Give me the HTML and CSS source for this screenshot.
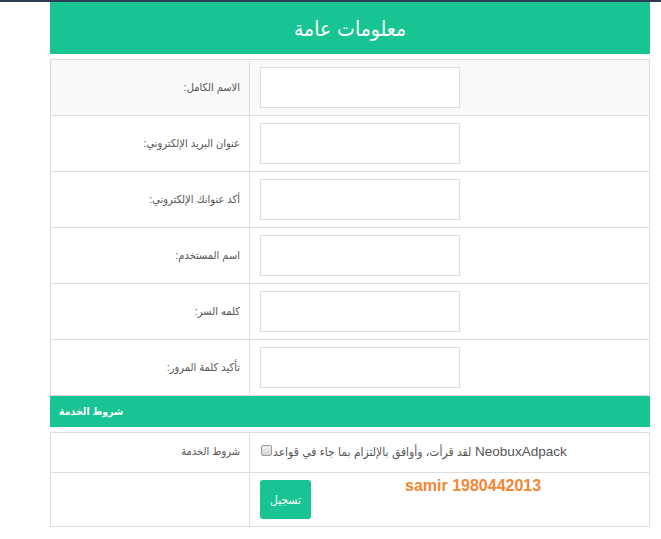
FILE: index.html
```html
<!DOCTYPE html>
<html lang="ar">
<head>
<meta charset="utf-8">
<title>معلومات عامة</title>
<link rel="stylesheet" href="styles.css">
</head>
<body>
<div class="topbar"></div>
<div class="container">
  <div class="panel-head"><h1 class="title">معلومات عامة</h1></div>
  <table class="form-table">
    <tr class="striped">
      <td class="label" dir="rtl">الاسم الكامل:</td>
      <td class="field"><input type="text" class="text-input"></td>
    </tr>
    <tr>
      <td class="label" dir="rtl">عنوان البريد الإلكتروني:</td>
      <td class="field"><input type="text" class="text-input"></td>
    </tr>
    <tr>
      <td class="label" dir="rtl">أكد عنوانك الإلكتروني:</td>
      <td class="field"><input type="text" class="text-input"></td>
    </tr>
    <tr>
      <td class="label" dir="rtl">اسم المستخدم:</td>
      <td class="field"><input type="text" class="text-input"></td>
    </tr>
    <tr>
      <td class="label" dir="rtl">كلمه السر:</td>
      <td class="field"><input type="password" class="text-input"></td>
    </tr>
    <tr>
      <td class="label" dir="rtl">تأكيد كلمة المرور:</td>
      <td class="field"><input type="password" class="text-input"></td>
    </tr>
  </table>
  <div class="section-bar">شروط الخدمة</div>
  <table class="form-table terms-table">
    <tr class="terms-row">
      <td class="label" dir="rtl">شروط الخدمة</td>
      <td class="field terms"><input type="checkbox" class="check"><span class="terms-ar">لقد قرأت، وأوافق بالإلتزام بما جاء في قواعد</span> NeobuxAdpack</td>
    </tr>
    <tr class="submit-row">
      <td class="label"></td>
      <td class="field">
        <div class="submit-wrap">
          <button type="button" class="btn">تسجيل</button>
          <span class="samir">samir 1980442013</span>
        </div>
      </td>
    </tr>
  </table>
</div>
</body>
</html>
```
FILE: styles.css
```css
html, body {
  margin: 0;
  padding: 0;
  background: #ffffff;
}
body {
  font-family: "Liberation Sans", "DejaVu Sans Condensed", "DejaVu Sans", sans-serif;
  color: #555555;
}
.topbar {
  height: 2px;
  background: #2c3e50;
}
.container {
  width: 600px;
  margin-left: 50px;
}
.panel-head {
  height: 52px;
  background: #18c492;
  display: flex;
  align-items: center;
  justify-content: center;
}
.title {
  margin: 0;
  font-size: 21px;
  font-weight: normal;
  color: #ffffff;
  line-height: 1;
}
.form-table {
  width: 600px;
  border-collapse: collapse;
  margin-top: 5px;
  table-layout: fixed;
}
.form-table td {
  border: 1px solid #dddddd;
  padding: 7px 10px;
  height: 41px;
  vertical-align: middle;
}
.form-table .label {
  width: 179px;
  font-size: 11px;
  color: #555555;
  text-align: right;
  padding-right: 9px;
  padding-left: 10px;
}
.striped td {
  background: #f9f9f9;
}
.text-input {
  display: block;
  box-sizing: border-box;
  width: 200px;
  height: 41px;
  margin: 0;
  border: 1px solid #dddddd;
  background: #ffffff;
  padding: 4px 8px;
}
.section-bar {
  height: 31px;
  background: #18c492;
  color: #ffffff;
  font-size: 10.5px;
  font-weight: bold;
  line-height: 31px;
  padding-left: 9px;
}
.terms-table {
  margin-top: 5px;
}
.terms-row td {
  height: 25px;
  padding-top: 6px;
  padding-bottom: 8px;
}
.terms {
  font-size: 13.5px;
  color: #555555;
}
.terms-ar {
  font-size: 12px;
}
.check {
  -webkit-appearance: none;
  appearance: none;
  width: 11px;
  height: 11px;
  margin: 0 1px 0 1px;
  border: 1px solid #9a9a9a;
  border-radius: 2px;
  background: linear-gradient(#f0f0f0, #d6d6d6);
  vertical-align: 0;
  box-sizing: border-box;
}
.submit-row td {
  height: 39px;
}
.submit-wrap {
  display: flex;
  align-items: flex-start;
  gap: 94px;
}
.btn {
  width: 51px;
  height: 39px;
  border: none;
  border-radius: 3px;
  background: #18c492;
  color: #ffffff;
  font-family: "Liberation Sans", "DejaVu Sans Condensed", "DejaVu Sans", sans-serif;
  font-size: 12px;
  padding: 0;
}
.samir {
  font-family: "Liberation Sans", Arial, sans-serif;
  font-size: 16px;
  font-weight: bold;
  line-height: 16px;
  color: #f38633;
  margin-top: -2px;
}
```
